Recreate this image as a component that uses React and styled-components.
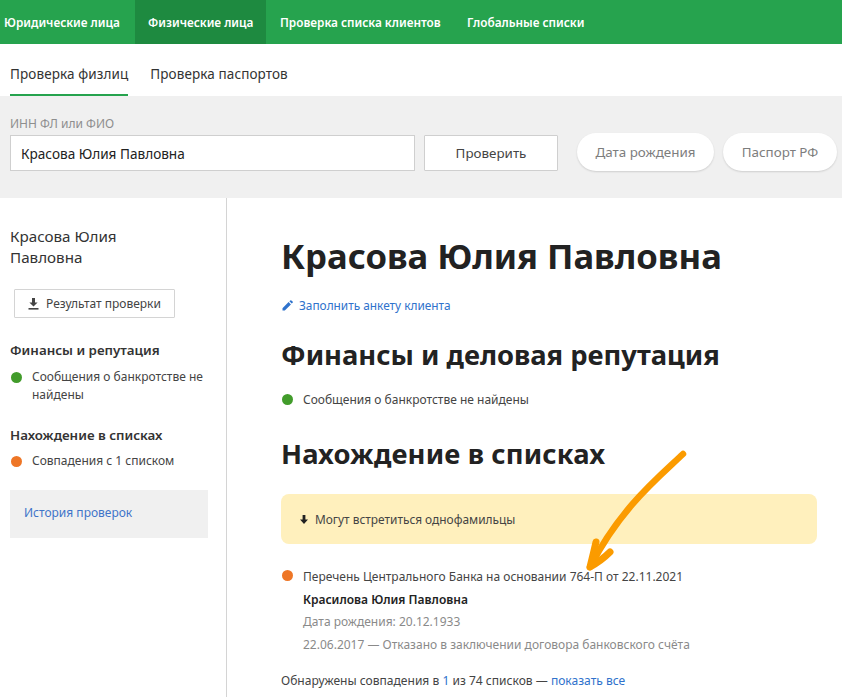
import React from 'react'
import styled, { createGlobalStyle } from 'styled-components'

const Global = createGlobalStyle`
  html, body {
    margin: 0;
    padding: 0;
    height: 100%;
    overflow: hidden;
    background: #fff;
  }
  body {
    font-family: "Noto Sans", "Open Sans", sans-serif;
    color: #222;
    font-size: 12px;
  }
  * { box-sizing: border-box; }
`

const Page = styled.div`
  position: relative;
  width: 842px;
  height: 697px;
  overflow: hidden;
`

const TopNav = styled.nav`
  display: flex;
  height: 44px;
  background: #26a34e;
  padding-left: 4px;
`

const TopLink = styled.a`
  display: flex;
  align-items: center;
  height: 100%;
  width: ${p => p.$width}px;
  padding-left: ${p => p.$pad}px;
  color: #fff;
  font-size: 11.8px;
  font-weight: 600;
  white-space: nowrap;
  background: ${p => (p.$active ? '#1e8a40' : 'transparent')};
`

const SubNav = styled.div`
  display: flex;
  gap: 22px;
  height: 52px;
  padding-left: 10px;
`

const SubTab = styled.a`
  display: flex;
  align-items: center;
  height: 52px;
  padding-top: 9px;
  font-size: 13.5px;
  color: #333;
  letter-spacing: 0.1px;
  border-bottom: 2px solid ${p => (p.$active ? '#26a34e' : 'transparent')};
`

const SearchBar = styled.div`
  display: flex;
  align-items: flex-start;
  height: 102px;
  padding: 19px 0 0 10px;
  background: #f0f0f0;
`

const Field = styled.div`
  display: flex;
  flex-direction: column;
  flex-shrink: 0;
  width: 405px;
`

const FieldLabel = styled.label`
  height: 20px;
  line-height: 17px;
  font-size: 12px;
  color: #8e8e8e;
`

const NameInput = styled.div`
  display: flex;
  align-items: center;
  height: 36px;
  padding-left: 10px;
  font-size: 13.6px;
  color: #222;
  background: #fff;
  border: 1px solid #cfcfcf;
`

const CheckButton = styled.button`
  flex-shrink: 0;
  width: 134px;
  height: 36px;
  margin: 20px 19px 0 9px;
  font: inherit;
  font-size: 13.4px;
  color: #444;
  background: #fff;
  border: 1px solid #cfcfcf;
  border-radius: 1px;
`

const Pill = styled.button`
  flex-shrink: 0;
  width: ${p => p.$width}px;
  height: 38px;
  margin: 18px 9px 0 0;
  padding: 0;
  font: inherit;
  font-size: 13.4px;
  color: #7d7d7d;
  background: #fff;
  border: none;
  border-radius: 19px;
  box-shadow: 0 1px 2px rgba(0, 0, 0, 0.14);
`

const Columns = styled.div`
  display: flex;
  height: 499px;
`

const Sidebar = styled.aside`
  width: 227px;
  padding: 28px 18px 0 10px;
  border-right: 1px solid #d4d4d4;
  flex-shrink: 0;
`

const SideName = styled.div`
  font-size: 15.2px;
  line-height: 21px;
  color: #333;
`

const ResultButton = styled.button`
  display: flex;
  align-items: center;
  justify-content: center;
  gap: 7px;
  width: 161px;
  height: 29px;
  margin: 21px 0 0 4px;
  padding: 0;
  font: inherit;
  font-size: 12px;
  color: #444;
  background: #fff;
  border: 1px solid #d4d4d4;
  border-radius: 1px;
`

const SideHeading = styled.div`
  margin: ${p => p.$top}px 0 0;
  font-size: 13.35px;
  line-height: 18px;
  font-weight: 600;
  color: #333;
`

const SideStatus = styled.div`
  display: flex;
  gap: 10px;
  margin-top: ${p => p.$top}px;
  font-size: 12px;
  line-height: 18px;
  color: #444;
`

const Dot = styled.span`
  flex-shrink: 0;
  width: 11px;
  height: 11px;
  margin-top: 4px;
  margin-left: 1px;
  border-radius: 50%;
  background: ${p => (p.$tone === 'green' ? '#429c2b' : '#ee7626')};
`

const HistoryBox = styled.div`
  width: 198px;
  height: 48px;
  margin-top: 20px;
  padding: 14px 14px 0;
  font-size: 12px;
  line-height: 18px;
  color: #3f74c9;
  background: #f0f0f0;
`

const Main = styled.main`
  flex: 1;
  padding: 35px 25px 0 54px;
`

const Title = styled.h1`
  margin: 0;
  font-size: 34.65px;
  line-height: 46px;
  font-weight: 700;
  color: #222;
`

const FormLink = styled.a`
  display: flex;
  align-items: center;
  gap: 6px;
  margin-top: 17px;
  margin-left: 1px;
  height: 18px;
  font-size: 11.85px;
  color: #2f72cc;
`

const SectionTitle = styled.h2`
  margin: ${p => p.$top}px 0 0;
  font-size: 27.35px;
  line-height: 38px;
  font-weight: 700;
  letter-spacing: ${p => p.$spacing || 0}px;
  color: #222;
`

const StatusRow = styled.div`
  display: flex;
  gap: 10px;
  margin-top: ${p => p.$top}px;
  font-size: 12px;
  line-height: 19px;
  color: #444;
`

const Notice = styled.div`
  display: flex;
  align-items: center;
  gap: 7px;
  height: 50px;
  margin-top: 21px;
  padding-left: 19px;
  font-size: 11.9px;
  color: #444;
  background: #fff0bd;
  border-radius: 8px;
`

const MatchInfo = styled.div`
  display: flex;
  flex-direction: column;
`

const MatchLine = styled.div`
  font-size: 12px;
  line-height: 22.5px;
  font-weight: ${p => (p.$strong ? 600 : 400)};
  color: ${p => (p.$muted ? '#8a8a8a' : p.$strong ? '#222' : '#444')};
`

const Summary = styled.div`
  margin-top: 15px;
  font-size: 12.05px;
  line-height: 19px;
  color: #444;
`

const BlueLink = styled.a`
  color: #2f72cc;
`

const ArrowLayer = styled.svg`
  position: absolute;
  left: 575px;
  top: 445px;
  pointer-events: none;
`

export default function App() {
  return (
    <Page>
      <Global />
      <TopNav>
        <TopLink $pad={0} $width={131}>Юридические лица</TopLink>
        <TopLink $active $pad={13} $width={131}>Физические лица</TopLink>
        <TopLink $pad={14} $width={188}>Проверка списка клиентов</TopLink>
        <TopLink $pad={13} $width={150}>Глобальные списки</TopLink>
      </TopNav>
      <SubNav>
        <SubTab $active>Проверка физлиц</SubTab>
        <SubTab>Проверка паспортов</SubTab>
      </SubNav>
      <SearchBar>
        <Field>
          <FieldLabel>ИНН ФЛ или ФИО</FieldLabel>
          <NameInput>Красова Юлия Павловна</NameInput>
        </Field>
        <CheckButton>Проверить</CheckButton>
        <Pill $width={137}>Дата рождения</Pill>
        <Pill $width={114}>Паспорт РФ</Pill>
      </SearchBar>
      <Columns>
        <Sidebar>
          <SideName>Красова Юлия<br />Павловна</SideName>
          <ResultButton>
            <svg width="11" height="12" viewBox="0 0 11 12" fill="#444">
              <path d="M4 0h3v4.5h2.6L5.5 8.6 1.4 4.5H4z" />
              <rect x="0.5" y="10" width="10" height="1.6" />
            </svg>
            Результат проверки
          </ResultButton>
          <SideHeading $top={23}>Финансы и репутация</SideHeading>
          <SideStatus $top={9}>
            <Dot $tone="green" />
            <span>Сообщения о банкротстве не найдены</span>
          </SideStatus>
          <SideHeading $top={22}>Нахождение в списках</SideHeading>
          <SideStatus $top={8}>
            <Dot $tone="orange" />
            <span>Совпадения с 1 списком</span>
          </SideStatus>
          <HistoryBox>История проверок</HistoryBox>
        </Sidebar>
        <Main>
          <Title>Красова Юлия Павловна</Title>
          <FormLink>
            <svg width="11" height="11" viewBox="0 0 11 11" fill="#2f72cc">
              <path d="M0.5 8.2 6.6 2.1l2.3 2.3-6.1 6.1H0.5zM7.4 1.3 8.3.4a.8.8 0 0 1 1.1 0l1.2 1.2a.8.8 0 0 1 0 1.1l-.9.9z" />
            </svg>
            Заполнить анкету клиента
          </FormLink>
          <SectionTitle $top={22}>Финансы и деловая репутация</SectionTitle>
          <StatusRow $top={16}>
            <Dot $tone="green" />
            <span>Сообщения о банкротстве не найдены</span>
          </StatusRow>
          <SectionTitle $top={26} $spacing={0.15}>Нахождение в списках</SectionTitle>
          <Notice>
            <svg width="8" height="9" viewBox="0 0 8 9" fill="#222">
              <path d="M2.6 0h2.8v4.5H8L4 9 0 4.5h2.6z" />
            </svg>
            Могут встретиться однофамильцы
          </Notice>
          <StatusRow $top={22}>
            <Dot $tone="orange" />
            <MatchInfo>
              <MatchLine>Перечень Центрального Банка на основании 764-П от 22.11.2021</MatchLine>
              <MatchLine $strong>Красилова Юлия Павловна</MatchLine>
              <MatchLine $muted>Дата рождения: 20.12.1933</MatchLine>
              <MatchLine $muted>22.06.2017 — Отказано в заключении договора банковского счёта</MatchLine>
            </MatchInfo>
          </StatusRow>
          <Summary>
            Обнаружены совпадения в <BlueLink>1</BlueLink> из 74 списков — <BlueLink>показать все</BlueLink>
          </Summary>
        </Main>
      </Columns>
      <ArrowLayer width="120" height="130" viewBox="0 0 120 130" fill="none">
        <path d="M108 9C84 32 46 62 15 122" stroke="#fb9b00" strokeWidth="6.5" strokeLinecap="round" />
        <path d="M21 97C19 106 17 114 15 122C22 118 29 113 35 107" stroke="#fb9b00" strokeWidth="7" strokeLinecap="round" strokeLinejoin="round" />
      </ArrowLayer>
    </Page>
  )
}
